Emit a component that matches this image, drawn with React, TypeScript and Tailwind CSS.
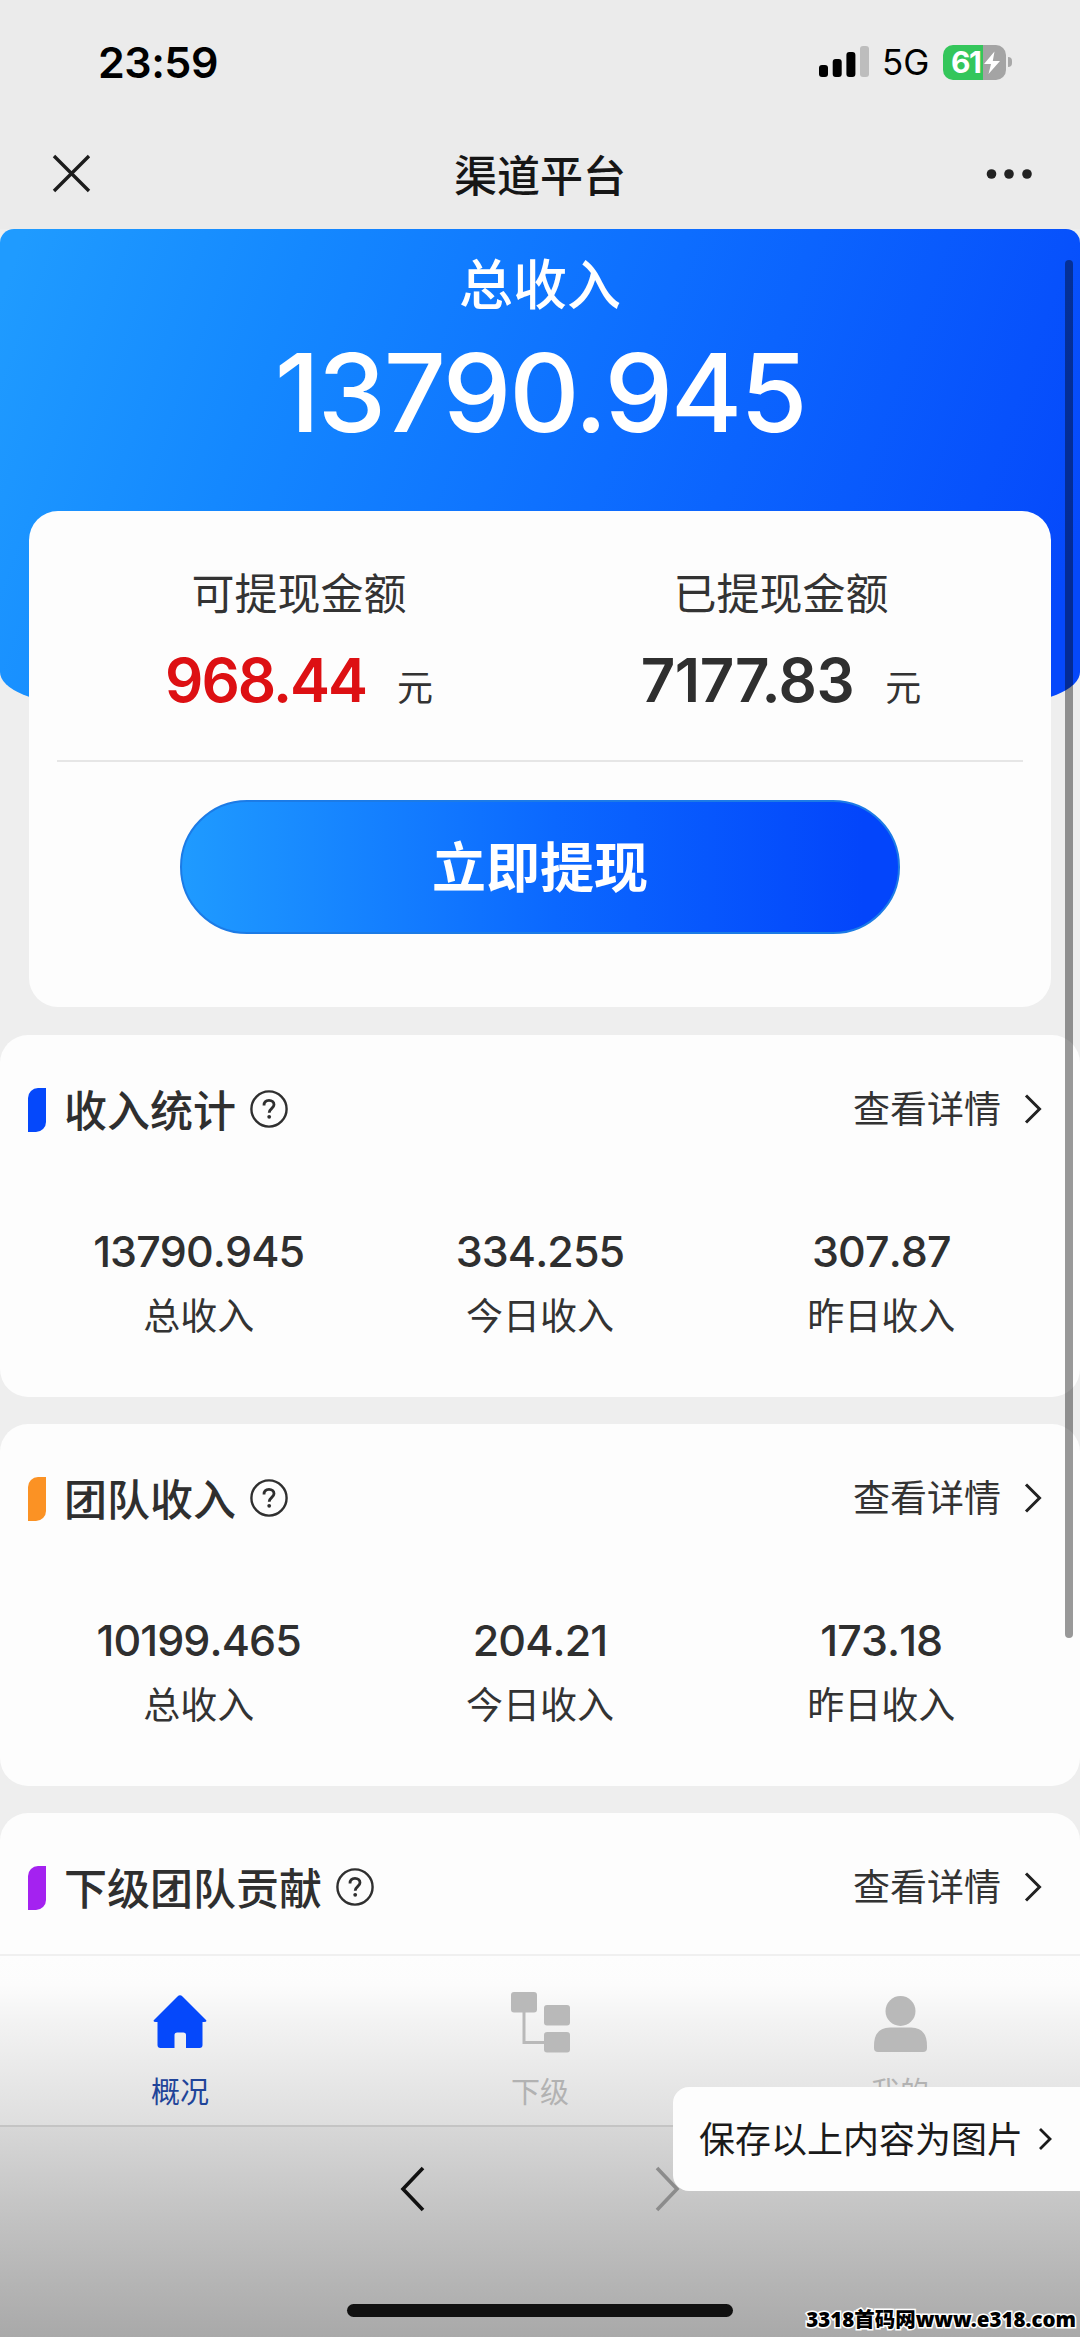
import { ReactNode } from "react";

const sections = [
  {
    title: "收入统计",
    marker: "bg-[#0548fb]",
    stats: [
      { value: "13790.945", label: "总收入" },
      { value: "334.255", label: "今日收入" },
      { value: "307.87", label: "昨日收入" },
    ],
  },
  {
    title: "团队收入",
    marker: "bg-[#fb9224]",
    stats: [
      { value: "10199.465", label: "总收入" },
      { value: "204.21", label: "今日收入" },
      { value: "173.18", label: "昨日收入" },
    ],
  },
  {
    title: "下级团队贡献",
    marker: "bg-[#a422f0]",
    stats: [],
  },
];

const StatusBar = () => (
  <div className="flex h-[124px] items-center justify-between pl-[98px] pr-[68px]">
    <span className="text-[43px] font-semibold leading-none tracking-[-0.5px] text-black">23:59</span>
    <div className="flex items-center">
      <svg width="50" height="32" viewBox="0 0 50 32">
        <rect x="0" y="19" width="9" height="12" rx="3" fill="#000" />
        <rect x="13.7" y="13" width="9" height="18" rx="3" fill="#000" />
        <rect x="27.4" y="6" width="9" height="25" rx="3" fill="#000" />
        <rect x="41" y="0" width="9" height="31" rx="3" fill="#bdbdbd" />
      </svg>
      <span className="ml-[13px] w-[48px] text-[35px] leading-none text-black">5G</span>
      <div className="relative ml-[13px] flex h-[35px] w-[63px] items-center overflow-hidden rounded-[10px] bg-[linear-gradient(90deg,#34c65b_64%,#a4a4a4_64%)] pl-[8px]">
        <span className="text-[30px] font-bold leading-none tracking-[-1.5px] text-white">61</span>
        <svg className="absolute right-[5px] top-[6px]" width="18" height="24" viewBox="0 0 18 23">
          <path d="M11.5 0 L1 12.5 H8 L5.5 22.5 L17 9.5 H9.8 Z" fill="#fff" />
        </svg>
      </div>
      <span className="ml-[2px] h-[10px] w-[4px] rounded-r-full bg-[#a8a8a8]" />
    </div>
  </div>
);

const NavBar = () => (
  <div className="flex h-[105px] items-start justify-between px-[48px] pt-[26px]">
    <svg width="48" height="48" viewBox="0 0 48 48">
      <path d="M6 6 L41 41 M41 6 L6 41" stroke="#1c1c1c" strokeWidth="3.4" fill="none" />
    </svg>
    <h1 className="pt-[2px] text-[43px] font-medium leading-[48px] text-[#161616]">渠道平台</h1>
    <svg width="48" height="48" viewBox="0 0 48 48">
      <circle cx="7.5" cy="24" r="4.8" fill="#222" />
      <circle cx="25" cy="24" r="4.8" fill="#222" />
      <circle cx="43" cy="24" r="4.8" fill="#222" />
    </svg>
  </div>
);

const Amount = ({ label, value, color }: { label: string; value: string; color: string }) => (
  <div className="flex flex-1 flex-col items-center">
    <span className="h-[46px] text-[43px] leading-[46px] text-[#333]">{label}</span>
    <div className="mt-[28px] flex h-[70px] items-center">
      <span className={`text-[60px] font-semibold leading-none ${color}`}>{value}</span>
      <span className="ml-[31px] mt-[16px] text-[36px] leading-none text-[#333]">元</span>
    </div>
  </div>
);

const SectionCard = ({ title, marker, children }: { title: string; marker: string; children?: ReactNode }) => (
  <section className="h-[362px] rounded-[28px] bg-[#fdfdfd]">
    <div className="flex h-[148px] items-center pl-[28px] pr-[37px]">
      <span className={`mt-[2px] h-[44px] w-[18px] rounded-br-[10px] rounded-tl-[10px] ${marker}`} />
      <h2 className="ml-[18px] mt-[5px] text-[43px] font-medium leading-none text-[#2f2f2f]">{title}</h2>
      <svg className="ml-[14px]" width="38" height="38" viewBox="0 0 38 38" fill="none" stroke="#2f2f2f">
        <circle cx="19" cy="19" r="17.6" strokeWidth="2.4" />
        <path
          d="M14 15.5 C14 12.2 16 10.400 19 10.400 C22 10.400 24 12.200 24 14.800 C24 18.200 19.200 18.600 19.200 22.800"
          strokeWidth="2.8"
        />
        <circle cx="19.2" cy="26.8" r="1.9" fill="#2f2f2f" stroke="none" />
      </svg>
      <span className="ml-auto text-[37px] leading-none text-[#333]">查看详情</span>
      <svg className="ml-[22px]" width="20" height="32" viewBox="0 0 20 32" fill="none">
        <path d="M3 2.5 L16.5 16 L3 29.5" stroke="#222" strokeWidth="3" />
      </svg>
    </div>
    {children}
  </section>
);

const HomeIcon = () => (
  <svg width="60" height="64" viewBox="0 0 60 64">
    <path
      d="M27.5 4.500 Q30 2 32.500 4.500 L55.500 27.500 Q58 30 54 30 H52.500 V53 Q52.500 56 49.500 56 H36 V43 Q36 40.500 33.500 40.500 H27 Q24.500 40.500 24.500 43 V56 H10.500 Q7.500 56 7.500 53 V30 H6 Q2 30 4.500 27.500 Z"
      fill="#0548fb"
    />
  </svg>
);

const TreeIcon = () => (
  <svg width="60" height="64" viewBox="0 0 60 64" fill="#b9b9b9">
    <rect x="1" y="0" width="26" height="20.5" rx="3" />
    <rect x="34" y="13" width="26" height="20.5" rx="3" />
    <rect x="34" y="40" width="26" height="20.5" rx="3" />
    <path d="M14 20 V50.5 H34" fill="none" stroke="#b9b9b9" strokeWidth="3" />
  </svg>
);

const UserIcon = () => (
  <svg width="60" height="64" viewBox="0 0 60 64" fill="#b9b9b9">
    <circle cx="30.5" cy="19" r="15" />
    <path d="M4 54 Q4 35.500 20 35.500 H41 Q57 35.500 57 54 V56 Q57 60 53 60 H8 Q4 60 4 56 Z" />
  </svg>
);

const tabs = [
  { label: "概况", icon: <HomeIcon />, color: "text-[#1f4499]" },
  { label: "下级", icon: <TreeIcon />, color: "text-[#b2b2b2]" },
  { label: "我的", icon: <UserIcon />, color: "text-[#b2b2b2]" },
];

const App = () => {
  return (
    <div className="relative flex h-[2337px] w-[1080px] flex-col overflow-hidden bg-[#eeeeee] font-['Inter','Noto_Sans_CJK_SC',sans-serif]">
      <header className="h-[229px] shrink-0 bg-[#ebebeb]">
        <StatusBar />
        <NavBar />
      </header>

      <main className="h-[1725px] shrink-0 overflow-hidden">
        <div className="flex h-[475px] flex-col items-center rounded-t-[14px] bg-[linear-gradient(110deg,#1f9bff_2%,#1488ff_25%,#0d6dff_55%,#0548fb_96%)] pt-[30px] [border-bottom-left-radius:80px_32px] [border-bottom-right-radius:80px_32px]">
          <p className="text-[54px] font-medium leading-[54px] text-white">总收入</p>
          <p className="mt-[25px] text-[109px] font-medium leading-[109px] tracking-[-2.2px] text-white">13790.945</p>
        </div>

        <div className="relative mx-[29px] mt-[-193px] flex h-[496px] flex-col rounded-[29px] bg-[#fdfdfd]">
          <div className="flex px-[29px] pt-[60px]">
            <Amount label="可提现金额" value="968.44" color="text-[#dd1013] tracking-[-2px]" />
            <Amount label="已提现金额" value="7177.83" color="text-[#2f2f2f] tracking-[-0.5px]" />
          </div>
          <div className="mx-[28px] mt-[45px] h-[2px] bg-[#e6e6e6]" />
          <button className="mx-auto mt-[38px] h-[134px] w-[720px] rounded-full border-2 border-[#1c7be6] bg-[linear-gradient(90deg,#1f9bff_0%,#0b68ff_52%,#0345fb_95%)] bg-origin-border pt-[3px] text-[54px] font-bold leading-none text-white">
            立即提现
          </button>
        </div>

        <div className="mt-[28px] flex flex-col gap-[27px]">
          {sections.map((section) => (
            <SectionCard key={section.title} title={section.title} marker={section.marker}>
              <div className="grid grid-cols-3 px-[28px] pt-[42px]">
                {section.stats.map((stat) => (
                  <div key={stat.label} className="flex flex-col items-center">
                    <span className="text-[43px] font-medium leading-[52px] tracking-[-0.9px] text-[#2f2f2f] [font-kerning:none]">
                      {stat.value}
                    </span>
                    <span className="mt-[20px] text-[37px] leading-[40px] text-[#333]">{stat.label}</span>
                  </div>
                ))}
              </div>
            </SectionCard>
          ))}
        </div>
      </main>

      <nav className="grid h-[173px] shrink-0 grid-cols-3 border-b-2 border-t-2 border-b-[#c4c4c4] border-t-[#f0f0f0] bg-[linear-gradient(180deg,#fdfdfd_0%,#fcfcfc_17%,#f3f3f3_38%,#dedede_100%)]">
        {tabs.map((tab) => (
          <div key={tab.label} className="flex flex-col items-center pt-[36px]">
            {tab.icon}
            <span className={`mt-[22px] text-[29px] leading-[30px] ${tab.color}`}>{tab.label}</span>
          </div>
        ))}
      </nav>

      <footer className="flex flex-1 flex-col items-center bg-[linear-gradient(180deg,#d7d7d7_0%,#c6c6c6_35%,#a9a9a9_100%)] pt-[38px]">
        <div className="flex w-[282px] justify-between">
          <svg width="28" height="48" viewBox="0 0 28 48" fill="none">
            <path d="M24 3 L4 24 L24 45" stroke="#111" strokeWidth="3.6" />
          </svg>
          <svg className="relative z-10" width="28" height="48" viewBox="0 0 28 48" fill="none">
            <path d="M4 3 L24 24 L4 45" stroke="#8c8c8c" strokeWidth="3.6" />
          </svg>
        </div>
        <div className="mt-[91px] h-[13px] w-[386px] rounded-full bg-[#111]" />
      </footer>

      {/* scroll indicator */}
      <div className="absolute right-[7px] top-[260px] h-[1378px] w-[8px] rounded-full bg-black/40" />

      {/* save as image prompt */}
      <div className="absolute right-0 top-[2087px] flex h-[104px] w-[407px] items-center rounded-l-[16px] bg-[#fdfdfd] pl-[26px]">
        <span className="pt-[2px] text-[36px] leading-none text-[#1a1a1a]">保存以上内容为图片</span>
        <svg className="ml-[13px]" width="18" height="26" viewBox="0 0 18 26" fill="none">
          <path d="M4 3 L14 13 L4 23" stroke="#1a1a1a" strokeWidth="2.8" />
        </svg>
      </div>

      <div className="absolute bottom-[6px] right-[4px] whitespace-nowrap font-['Noto_Sans','Noto_Sans_CJK_SC',sans-serif] text-[20.5px] font-black leading-[24px] text-black [paint-order:stroke_fill] [-webkit-text-stroke:3px_white]">
        3318首码网www.e318.com
      </div>
    </div>
  );
};

export default App;
